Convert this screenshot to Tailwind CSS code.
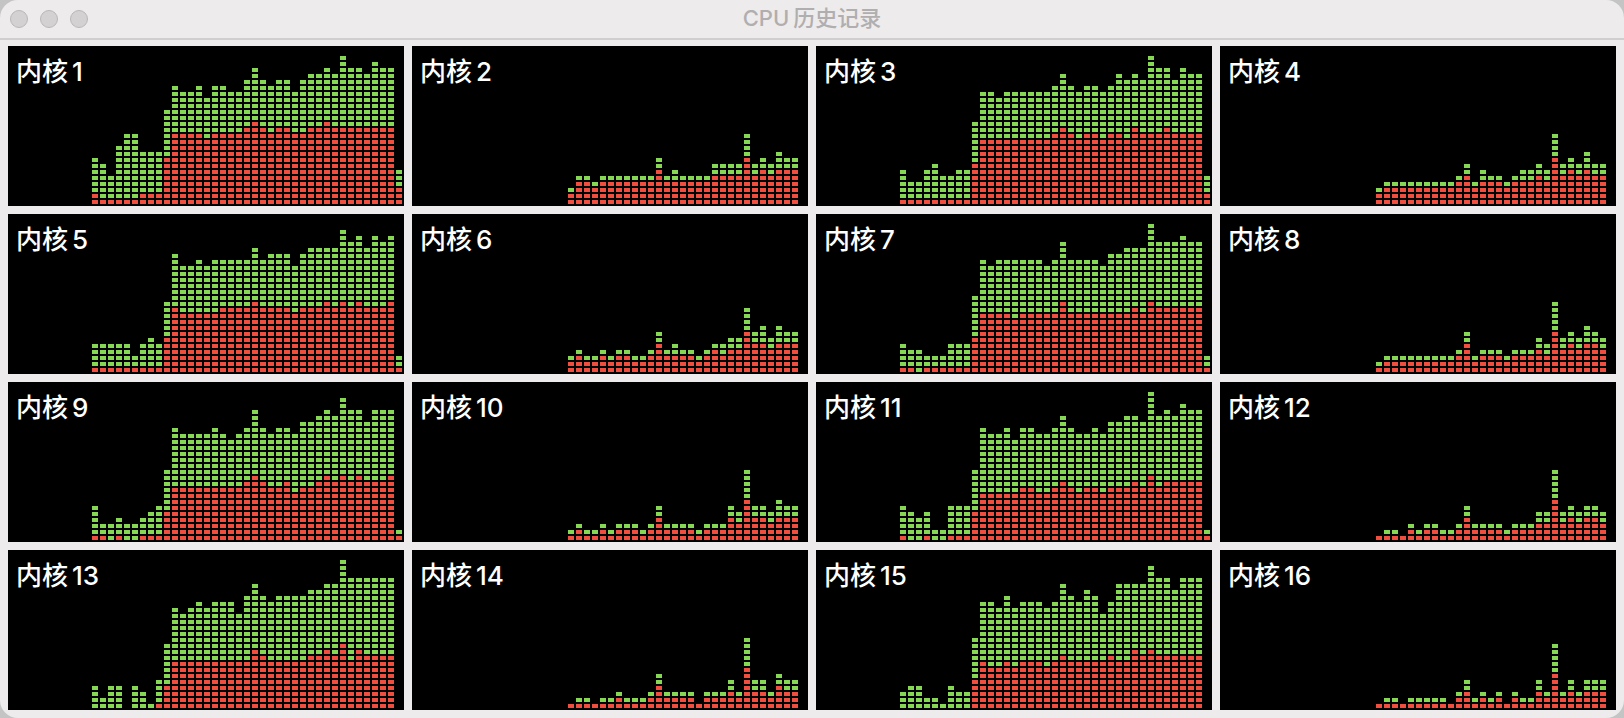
<!DOCTYPE html>
<html lang="zh-CN">
<head>
<meta charset="utf-8">
<title>CPU历史记录</title>
<script src="https://cdn.jsdelivr.net/npm/@tailwindcss/browser@4"></script>
</head>
<body class="bg-[#c4c4c4] font-['Inter','Noto_Sans_CJK_SC',sans-serif]">
<div class="flex min-h-screen flex-col overflow-hidden rounded-[18px] bg-[#edebec]">
  <header class="grid h-10 grid-cols-[1fr_auto_1fr] items-start border-b-2 border-[#d0cecf] px-2.5">
    <div class="flex gap-3 pt-2.5">
      <button aria-label="关闭" class="size-[18px] rounded-full border border-[#b9b7b8] bg-[#d3d1d2]"></button>
      <button aria-label="最小化" class="size-[18px] rounded-full border border-[#b9b7b8] bg-[#d3d1d2]"></button>
      <button aria-label="缩放" class="size-[18px] rounded-full border border-[#b9b7b8] bg-[#d3d1d2]"></button>
    </div>
    <h1 class="flex gap-1 pt-1 text-[22px]/[28px] font-medium text-[#b0aeaf]"><span>CPU</span><span>历史记录</span></h1>
  </header>
  <main id="cores" class="grid flex-1 auto-rows-fr grid-cols-4 gap-2 px-2 pt-1.5 pb-2"></main>
</div>

<template id="core">
  <section class="relative flex items-end justify-end overflow-hidden bg-black pr-0.5 pb-0.5">
    <h2 class="absolute top-[9px] left-2 flex gap-1 text-[26px]/[34px] font-medium text-white"><span>内核</span><span data-number></span></h2>
    <div data-chart class="flex items-end gap-0.5"></div>
  </section>
</template>
<template id="column">
  <div class="flex w-1.5 flex-col">
    <div data-user class="bg-[#86d854] bg-[linear-gradient(#000_2px,transparent_2px)] bg-[length:100%_6px]"></div>
    <div data-system class="bg-[#f04e3e] bg-[linear-gradient(#000_2px,transparent_2px)] bg-[length:100%_6px]"></div>
  </div>
</template>

<script>
// One line per core, oldest sample first: total blocks/system blocks.
const history = [
  "8/2 7/1 5/1 10/1 12/1 12/1 9/2 9/2 9/2 16/8 20/12 19/12 19/12 20/12 18/11 20/12 20/12 19/12 19/12 21/13 23/14 21/13 20/12 21/13 21/13 19/12 21/12 22/13 22/13 23/14 22/13 25/13 23/13 23/13 22/13 24/13 23/13 23/13 6/3",
  "3/2 5/4 5/4 4/3 5/4 5/4 5/4 5/4 5/4 5/4 5/4 8/6 5/4 6/4 5/4 5/4 5/4 5/4 7/5 7/5 7/5 7/5 12/8 7/5 8/6 7/5 9/6 8/6 8/6 0/0",
  "6/1 4/1 4/1 6/1 7/1 5/1 5/1 6/1 6/1 14/7 19/11 19/11 18/11 19/11 19/11 19/11 19/11 19/11 19/11 20/12 22/13 20/12 19/11 20/12 20/12 19/11 20/12 22/12 21/11 22/13 21/12 25/12 23/12 23/13 21/12 23/12 22/12 22/12 5/2",
  "3/2 4/3 4/3 4/3 4/3 4/3 4/3 4/3 4/3 4/3 5/4 7/5 4/3 6/4 5/4 5/4 4/3 5/4 6/4 6/4 7/5 6/4 12/8 7/5 8/6 7/5 9/6 7/5 7/5 0/0",
  "5/1 5/1 5/1 5/1 5/1 3/1 5/1 6/1 5/1 12/6 20/11 18/10 18/10 19/10 18/10 19/10 19/11 19/11 19/11 19/11 21/12 19/11 20/11 20/11 20/11 18/10 20/11 21/11 21/11 21/12 21/11 24/12 22/11 23/12 21/11 23/11 22/11 23/12 3/1",
  "3/2 4/3 3/2 3/2 4/3 3/2 4/3 4/3 3/2 3/2 4/3 7/5 4/3 5/3 4/3 4/3 3/2 4/3 5/4 5/3 6/4 6/4 11/7 7/5 8/5 6/4 8/5 7/5 7/5 0/0",
  "5/1 4/1 4/0 3/1 3/1 3/1 5/1 5/1 5/1 13/6 19/10 18/10 19/10 19/10 19/9 19/10 19/10 19/10 18/10 19/10 22/12 19/10 19/10 19/10 19/10 18/10 20/10 20/10 21/10 21/11 21/10 25/12 22/11 22/11 22/11 23/11 22/11 22/11 3/1",
  "2/1 3/2 3/2 3/2 3/2 3/2 3/2 3/2 3/2 3/2 4/3 7/5 3/2 4/3 4/3 4/3 3/2 4/3 4/3 4/3 6/4 5/3 12/7 6/4 7/5 6/4 8/5 7/5 6/4 0/0",
  "6/1 3/1 3/0 4/1 3/0 3/0 4/1 5/1 6/1 12/5 19/9 18/9 18/9 18/9 18/9 19/9 18/9 17/9 18/9 19/10 22/11 19/10 18/9 19/9 19/10 18/8 20/9 20/9 21/10 22/11 21/10 24/11 22/10 22/11 20/10 22/10 22/10 22/11 2/1",
  "2/1 3/2 2/1 2/1 3/2 2/1 3/2 3/2 3/2 2/1 3/2 6/4 3/2 3/2 3/2 3/2 2/1 3/2 3/2 3/2 6/4 5/3 12/7 6/4 6/4 5/3 7/4 6/4 6/4 0/0",
  "6/1 5/0 4/0 5/1 2/0 2/0 6/1 6/1 6/1 12/5 19/8 18/8 18/8 19/8 17/8 19/9 19/9 18/8 18/8 19/9 21/10 19/9 18/8 18/9 19/9 18/8 20/9 20/9 21/9 21/10 20/9 25/11 21/9 22/10 21/10 23/10 22/10 22/10 2/1",
  "1/1 2/1 2/1 1/1 3/2 2/1 3/2 3/2 2/1 2/1 3/2 6/4 3/2 3/2 3/2 3/2 2/1 3/2 3/2 3/2 5/3 5/3 12/7 5/3 6/4 5/3 6/4 6/4 5/3 0/0",
  "4/0 2/0 4/0 4/0 0/0 4/0 3/0 1/0 5/1 11/4 17/8 16/8 17/8 18/8 17/8 18/8 18/8 18/8 16/8 19/8 21/10 19/9 18/8 19/8 19/8 19/8 19/8 20/9 20/9 21/10 21/9 25/11 22/8 22/10 22/9 22/9 22/9 22/9 0/0",
  "1/1 2/1 2/1 1/1 2/1 2/1 3/2 2/1 2/1 2/1 3/2 6/4 3/2 3/2 3/2 3/2 1/1 3/2 3/2 3/2 5/3 3/2 12/7 5/3 5/3 3/2 6/4 5/3 5/3 0/0",
  "3/0 4/0 4/0 2/0 2/0 1/0 4/0 3/0 3/0 12/5 18/8 18/7 17/7 19/8 17/7 18/8 18/8 18/8 17/7 18/8 21/9 19/8 18/8 20/8 19/8 16/8 18/9 21/8 21/8 21/10 21/9 24/10 22/9 22/9 20/9 22/9 22/9 22/9 0/0",
  "1/1 2/1 2/1 1/1 2/1 2/1 2/1 2/1 2/1 1/1 3/2 5/3 2/1 3/2 2/1 3/2 1/1 3/2 2/1 2/1 5/3 3/2 11/6 3/2 5/3 3/2 5/3 5/3 5/3 0/0"
];
const BLOCK = 6; // 4px block plus 2px gap
const coreTemplate = document.getElementById("core");
const columnTemplate = document.getElementById("column");
history.forEach((line, index) => {
  const core = coreTemplate.content.cloneNode(true);
  core.querySelector("[data-number]").textContent = index + 1;
  const chart = core.querySelector("[data-chart]");
  for (const sample of line.split(" ")) {
    const [total, system] = sample.split("/").map(Number);
    const column = columnTemplate.content.cloneNode(true);
    column.querySelector("[data-user]").style.height = (total - system) * BLOCK + "px";
    column.querySelector("[data-system]").style.height = system * BLOCK + "px";
    chart.append(column);
  }
  document.getElementById("cores").append(core);
});
</script>
</body>
</html>
